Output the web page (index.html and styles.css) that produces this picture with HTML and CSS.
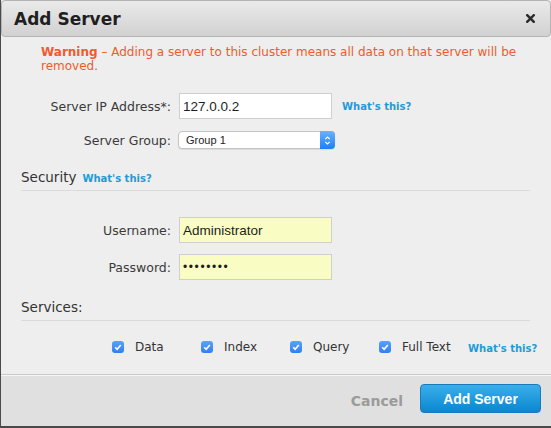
FILE: index.html
```html
<!DOCTYPE html>
<html>
<head>
<meta charset="utf-8">
<title>Add Server</title>
<link rel="stylesheet" href="styles.css">
</head>
<body>
<div class="dialog">
  <header class="dlg-head">
    <h1 class="dlg-title">Add Server</h1>
    <button class="close" aria-label="Close">
      <svg width="9" height="9" viewBox="0 0 9 9"><path d="M1.2 1.2 L7.8 7.8 M7.8 1.2 L1.2 7.8" stroke="#2b2b2b" stroke-width="2.4" stroke-linecap="square"/></svg>
    </button>
  </header>
  <div class="dlg-body">
    <p class="warning"><strong>Warning</strong> – Adding a server to this cluster means all data on that server will be removed.</p>

    <div class="form-row row-ip">
      <label class="lbl">Server IP Address*:</label>
      <input class="txt" type="text" value="127.0.0.2">
      <a class="help" href="#">What's this?</a>
    </div>

    <div class="form-row row-group">
      <label class="lbl">Server Group:</label>
      <div class="select">
        <span>Group 1</span>
        <span class="stepper">
          <svg width="7" height="11" viewBox="0 0 7 11"><path d="M1.3 4.2 L3.5 2 L5.7 4.2 M1.3 6.8 L3.5 9 L5.7 6.8" stroke="#fff" stroke-width="1.2" fill="none"/></svg>
        </span>
      </div>
    </div>

    <div class="section section-security">Security<a class="help" href="#">What's this?</a></div>

    <div class="form-row row-user">
      <label class="lbl">Username:</label>
      <input class="txt autofill" type="text" value="Administrator">
    </div>
    <div class="form-row row-pass">
      <label class="lbl">Password:</label>
      <input class="txt autofill pw" type="password" value="password">
    </div>

    <div class="section section-services">Services:</div>

    <div class="services">
      <label class="check"><span class="box"><svg width="12" height="12" viewBox="0 0 12 12"><path d="M3.2 6.3 L5.1 8.2 L8.8 3.9" stroke="#fff" stroke-width="1.6" fill="none"/></svg></span>Data</label>
      <label class="check"><span class="box"><svg width="12" height="12" viewBox="0 0 12 12"><path d="M3.2 6.3 L5.1 8.2 L8.8 3.9" stroke="#fff" stroke-width="1.6" fill="none"/></svg></span>Index</label>
      <label class="check"><span class="box"><svg width="12" height="12" viewBox="0 0 12 12"><path d="M3.2 6.3 L5.1 8.2 L8.8 3.9" stroke="#fff" stroke-width="1.6" fill="none"/></svg></span>Query</label>
      <label class="check"><span class="box"><svg width="12" height="12" viewBox="0 0 12 12"><path d="M3.2 6.3 L5.1 8.2 L8.8 3.9" stroke="#fff" stroke-width="1.6" fill="none"/></svg></span>Full Text</label>
      <a class="help help-services" href="#">What's this?</a>
    </div>
  </div>
  <footer class="dlg-foot">
    <button class="btn-cancel">Cancel</button>
    <button class="btn-primary">Add Server</button>
  </footer>
</div>
</body>
</html>
```
FILE: styles.css
```css
* { box-sizing: border-box; }
html, body { margin: 0; height: 100%; }
body {
  background: #4a4a4a;
  font-family: "DejaVu Sans", sans-serif;
  color: #353535;
}
.dialog {
  margin-left: 1px;
  width: 550px;
  height: 426px;
  background: #eeeeee;
  display: flex;
  flex-direction: column;
}
.dlg-head {
  height: 37px;
  flex: none;
  display: flex;
  align-items: center;
  justify-content: space-between;
  padding: 0 15px 0 12px;
  background: linear-gradient(#eaeaea, #d1d1d1);
  border: 1px solid #b4b4b4;
  border-radius: 4px;
}
.dlg-title {
  margin: 0;
  font: bold 17px "DejaVu Sans", sans-serif;
  color: #1f1f1f;
}
.close {
  width: 9px;
  height: 9px;
  padding: 0;
  border: 0;
  background: none;
  display: flex;
}
.dlg-body {
  flex: 1;
  padding: 0 21px 0 20px;
}
.warning {
  margin: 8px 0 0 20px;
  font-size: 12px;
  line-height: 14px;
  color: #ef5b2b;
}
.form-row {
  display: flex;
  align-items: center;
}
.lbl {
  width: 150px;
  flex: none;
  text-align: right;
  font-size: 12.5px;
  margin-right: 8px;
  color: #3a3a3a;
}
.txt {
  width: 153px;
  height: 26px;
  border: 1px solid #cfcfcf;
  background: #fff;
  padding: 0 0 0 3px;
  font: 13.5px "Liberation Sans", sans-serif;
  color: #1e1e1e;
  outline: none;
}
.txt.autofill { background: #fafdc3; }
.txt.pw { letter-spacing: 1.6px; font-size: 12px; }
.help {
  font: bold 10px "DejaVu Sans", sans-serif;
  color: #1d9bd9;
  text-decoration: none;
  margin-left: 10px;
  white-space: nowrap;
  flex: none;
}
.row-ip { margin-top: 20px; }
.row-group { margin-top: 12px; }
.select {
  width: 157px;
  height: 18px;
  margin-left: -1px;
  border: 1px solid #c2c2c2;
  border-radius: 4px;
  background: #fff;
  display: flex;
  align-items: center;
  justify-content: space-between;
  padding-left: 7px;
  font: 11px "Liberation Sans", sans-serif;
  color: #222;
  box-shadow: 0 1px 1px rgba(0,0,0,0.08);
}
.stepper {
  width: 15px;
  height: 18px;
  margin: -1px -1px -1px 0;
  border-radius: 0 4px 4px 0;
  background: linear-gradient(#6ab2fb, #1f7ff7);
  display: flex;
  align-items: center;
  justify-content: center;
}
.section {
  font-size: 13.5px;
  line-height: 18px;
  padding-bottom: 4px;
  border-bottom: 1px solid #dadbdc;
  display: flex;
  align-items: baseline;
  color: #333;
}
.section .help { margin-left: 6px; }
.section-security { margin-top: 19px; }
.row-user { margin-top: 26px; }
.row-pass { margin-top: 11px; }
.section-services { margin-top: 18px; }
.services {
  margin-top: 17px;
  height: 18px;
  padding-left: 91px;
  display: flex;
  align-items: center;
  margin-right: -10px;
}
.check {
  width: 89px;
  flex: none;
  display: flex;
  align-items: center;
  gap: 11px;
  font-size: 12px;
  color: #333;
}
.box {
  width: 12px;
  height: 12px;
  border-radius: 3px;
  background: linear-gradient(#5aa2f9, #2f7ff2);
  display: flex;
}
.help-services { margin-left: 0; margin-top: 2px; }
.dlg-foot {
  height: 52px;
  flex: none;
  border-top: 1px solid #c9c9c9;
  box-shadow: inset 0 1px #f7f7f7;
  background: #dfe0df;
  display: flex;
  align-items: flex-start;
  justify-content: flex-end;
  gap: 17px;
  padding: 9px 10px 0 0;
}
.btn-cancel {
  height: 29px;
  margin-top: 2px;
  padding: 0;
  border: 0;
  background: none;
  font: bold 14px "DejaVu Sans", sans-serif;
  color: #9b9b9b;
}
.btn-primary {
  width: 121px;
  height: 29px;
  border: 1px solid #1b79bd;
  border-radius: 4px;
  background: linear-gradient(#3aaeea, #0a87d0);
  color: #fff;
  font: bold 14px "Liberation Sans", sans-serif;
  padding: 0;
}
```
